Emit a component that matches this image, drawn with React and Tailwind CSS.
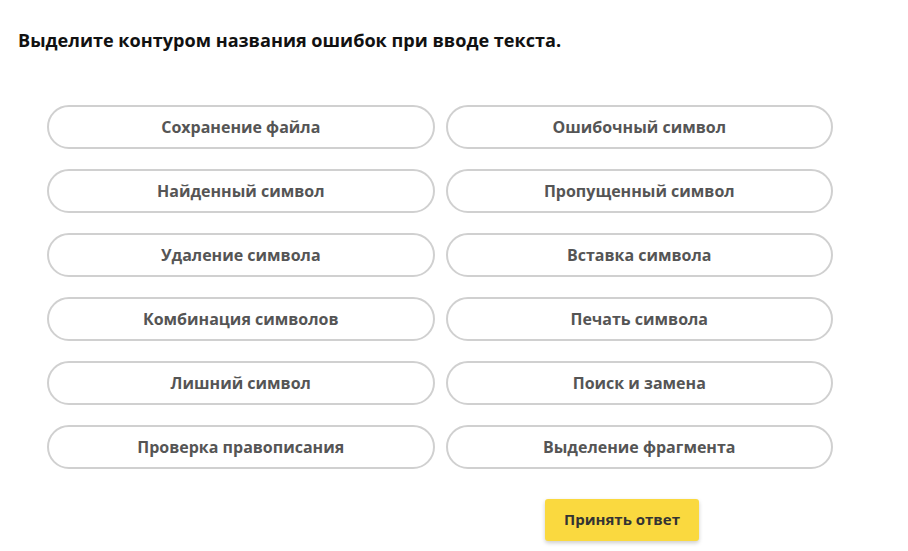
import React from 'react';

const items = [
  'Сохранение файла',
  'Ошибочный символ',
  'Найденный символ',
  'Пропущенный символ',
  'Удаление символа',
  'Вставка символа',
  'Комбинация символов',
  'Печать символа',
  'Лишний символ',
  'Поиск и замена',
  'Проверка правописания',
  'Выделение фрагмента',
];

export default function App() {
  return (
    <div className="min-h-screen bg-white font-['Open_Sans',sans-serif] pt-[28px]">
      <h1 className="pl-[18px] text-[18.1px] leading-[24px] font-bold text-[#111]">
        Выделите контуром названия ошибок при вводе текста.
      </h1>

      <div className="ml-[47px] mt-[53px] grid w-[786px] grid-cols-2 gap-x-[11px] gap-y-[20px]">
        {items.map((t) => (
          <button
            key={t}
            className="h-[44px] rounded-full border-2 border-[#d0d0d0] bg-white text-[16px] font-bold text-[#555]"
          >
            {t}
          </button>
        ))}
      </div>

      <div className="mt-[30px] pl-[545px]">
        <button className="h-[42px] w-[154px] rounded-[3px] bg-[#fad93f] pb-[2px] text-[15px] font-bold text-[#333] shadow-[0_2px_4px_rgba(0,0,0,0.2)]">
          Принять ответ
        </button>
      </div>
    </div>
  );
}
